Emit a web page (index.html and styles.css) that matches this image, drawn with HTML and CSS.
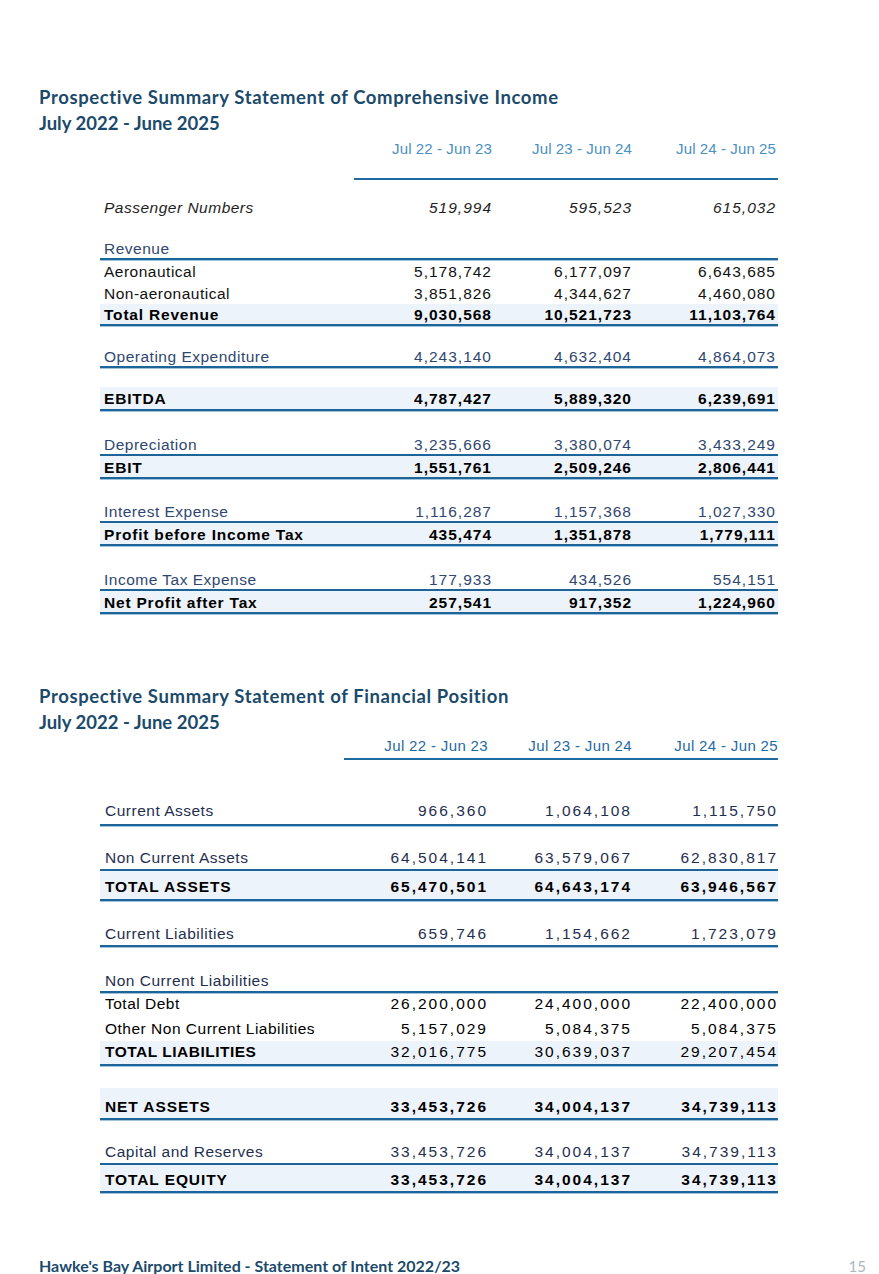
FILE: index.html
```html
<!DOCTYPE html>
<html lang="en">
<head>
<meta charset="utf-8">
<title>Statement of Intent 2022/23</title>
<link rel="stylesheet" href="styles.css">
</head>
<body>
<div class="page">
  <section class="block first">
    <h1 class="title">Prospective Summary Statement of Comprehensive Income</h1>
    <h2 class="subtitle">July 2022 - June 2025</h2>
    <div class="table t1">
      <div class="row head"><span></span><span class="h">Jul 22 - Jun 23</span><span class="h">Jul 23 - Jun 24</span><span class="h">Jul 24 - Jun 25</span></div>
      <div class="row it g16"><span>Passenger Numbers</span><span class="n">519,994</span><span class="n">595,523</span><span class="n">615,032</span></div>
      <div class="row soft rule g20"><span>Revenue</span><span></span><span></span><span></span></div>
      <div class="row h22"><span>Aeronautical</span><span class="n">5,178,742</span><span class="n">6,177,097</span><span class="n">6,643,685</span></div>
      <div class="row h22"><span>Non-aeronautical</span><span class="n">3,851,826</span><span class="n">4,344,627</span><span class="n">4,460,080</span></div>
      <div class="row b shade rule h20"><span>Total Revenue</span><span class="n">9,030,568</span><span class="n">10,521,723</span><span class="n">11,103,764</span></div>
      <div class="row soft rule g19"><span>Operating Expenditure</span><span class="n">4,243,140</span><span class="n">4,632,404</span><span class="n">4,864,073</span></div>
      <div class="row b shade rule g19 h22"><span>EBITDA</span><span class="n">4,787,427</span><span class="n">5,889,320</span><span class="n">6,239,691</span></div>
      <div class="row soft rule g22"><span>Depreciation</span><span class="n">3,235,666</span><span class="n">3,380,074</span><span class="n">3,433,249</span></div>
      <div class="row b shade rule"><span>EBIT</span><span class="n">1,551,761</span><span class="n">2,509,246</span><span class="n">2,806,441</span></div>
      <div class="row soft rule g21"><span>Interest Expense</span><span class="n">1,116,287</span><span class="n">1,157,368</span><span class="n">1,027,330</span></div>
      <div class="row b shade rule"><span>Profit before Income Tax</span><span class="n">435,474</span><span class="n">1,351,878</span><span class="n">1,779,111</span></div>
      <div class="row soft rule g22"><span>Income Tax Expense</span><span class="n">177,933</span><span class="n">434,526</span><span class="n">554,151</span></div>
      <div class="row b shade rule"><span>Net Profit after Tax</span><span class="n">257,541</span><span class="n">917,352</span><span class="n">1,224,960</span></div>
    </div>
  </section>

  <section class="block second">
    <h1 class="title">Prospective Summary Statement of Financial Position</h1>
    <h2 class="subtitle">July 2022 - June 2025</h2>
    <div class="table t2">
      <div class="row head"><span></span><span class="h">Jul 22 - Jun 23</span><span class="h">Jul 23 - Jun 24</span><span class="h">Jul 24 - Jun 25</span></div>
      <div class="row rule g38 p2 h26"><span>Current Assets</span><span class="n">966,360</span><span class="n">1,064,108</span><span class="n">1,115,750</span></div>
      <div class="row rule g21 h22"><span>Non Current Assets</span><span class="n">64,504,141</span><span class="n">63,579,067</span><span class="n">62,830,817</span></div>
      <div class="row b shade rule p5 h28"><span>TOTAL ASSETS</span><span class="n">65,470,501</span><span class="n">64,643,174</span><span class="n">63,946,567</span></div>
      <div class="row rule g22 h22"><span>Current Liabilities</span><span class="n">659,746</span><span class="n">1,154,662</span><span class="n">1,723,079</span></div>
      <div class="row rule g23"><span>Non Current Liabilities</span><span></span><span></span><span></span></div>
      <div class="row dark h22"><span>Total Debt</span><span class="n">26,200,000</span><span class="n">24,400,000</span><span class="n">22,400,000</span></div>
      <div class="row dark p3 h26"><span>Other Non Current Liabilities</span><span class="n">5,157,029</span><span class="n">5,084,375</span><span class="n">5,084,375</span></div>
      <div class="row shade rule h23 dark"><span class="lb">TOTAL LIABILITIES</span><span class="n">32,016,775</span><span class="n">30,639,037</span><span class="n">29,207,454</span></div>
      <div class="row b shade rule g22 p8 h30"><span>NET ASSETS</span><span class="n">33,453,726</span><span class="n">34,004,137</span><span class="n">34,739,113</span></div>
      <div class="row rule g21 h22"><span>Capital and Reserves</span><span class="n">33,453,726</span><span class="n">34,004,137</span><span class="n">34,739,113</span></div>
      <div class="row b shade rule p4 h26"><span>TOTAL EQUITY</span><span class="n">33,453,726</span><span class="n">34,004,137</span><span class="n">34,739,113</span></div>
    </div>
  </section>

  <footer class="footer">
    <span class="foot-text">Hawke's Bay Airport Limited - Statement of Intent 2022/23</span>
    <span class="page-no">15</span>
  </footer>
</div>
</body>
</html>
```

FILE: styles.css
```css
* { box-sizing: border-box; }
html, body { margin: 0; padding: 0; background: #ffffff; }
body {
  font-family: "Liberation Sans", Arial, sans-serif;
  color: #111111;
}
.page {
  width: 879px;
  height: 1274px;
  padding: 84px 13px 0 39px;
  display: flex;
  flex-direction: column;
}
.title, .subtitle {
  margin: 0;
  font-family: "Lato", "Open Sans", sans-serif;
  font-weight: 700;
  font-size: 18.5px;
  line-height: 26px;
  color: #1b4a6b;
}
.title { letter-spacing: 0.62px; }
.subtitle { letter-spacing: 0; }
.second { margin-top: 69px; }
.second .subtitle { line-height: 27px; }

.table {
  margin-left: 61px;
  width: 678px;
  font-size: 15.5px;
}
.row {
  display: grid;
  height: 21px;
  line-height: 23px;
  align-items: start;
  white-space: nowrap;
}
.t1 .row { grid-template-columns: 254px 140px 140px 144px; }
.t2 .row { grid-template-columns: 244px 144px 144px 146px; }
.row > span { display: block; }
.row > span:first-child { padding-left: 4px; letter-spacing: 0.5px; }
.row.b > span:first-child { letter-spacing: 0.8px; }
.row .n { text-align: right; padding-right: 2px; letter-spacing: 1px; }
.t2 .row > span:first-child { padding-left: 5px; letter-spacing: 0.5px; }
.t2 .row.b > span:first-child, .t2 .lb { letter-spacing: 0.9px; }
.t2 .row .n { letter-spacing: 2px; padding-right: 0; }

.head { height: 42px; margin-top: 2px; }
.head .h {
  text-align: right;
  font-size: 15px;
  line-height: 22px;
  height: 42px;
  padding-right: 2px;
  letter-spacing: 0.1px;
  color: #4a90c2;
  border-bottom: 2px solid #1f6a9e;
  padding-bottom: 18px;
}
.t2 .head { height: 25px; margin-top: -1px; }
.t2 .head .h {
  height: 25px;
  padding-bottom: 0;
  color: #1f6aa5;
  letter-spacing: 0.35px;
  padding-right: 0;
}

.rule { border-bottom: 2px solid #1d6598; box-shadow: 0 1px 0 #9fc3dd; }
.shade { background: #edf3fa; }
.b { font-weight: 700; color: #000000; }
.it { font-style: italic; color: #1e1e1e; }
.soft { color: #2f4770; }
.dark { color: #111111; }
.t2 .row { color: #1f2f4f; line-height: 22px; }
.t2 .row.b, .t2 .row.dark { color: #000000; }
.lb { font-weight: 700; }

.h20 { height: 22px; line-height: 22px; }
.h22 { height: 22px; line-height: 23px; }
.rule.h20 { height: 22px; }
.rule { height: 23px; }
.rule.h22 { height: 24px; }
.h23 { height: 25px; line-height: 23px; }
.t2 .h22 { line-height: 22px; }
.h26 { height: 26px; }
.t2 .h26 { line-height: 22px; }
.rule.h26 { height: 28px; }
.h28 { height: 30px; }
.t2 .h28, .t2 .h30 { line-height: 22px; }
.h30 { height: 32px; }
.p2 { padding-top: 2px; }
.p3 { padding-top: 3px; }
.p4 { padding-top: 4px; }
.p5 { padding-top: 5px; }
.p8 { padding-top: 8px; }

.g16 { margin-top: 16px; }
.g19 { margin-top: 19px; }
.g20 { margin-top: 20px; }
.g21 { margin-top: 21px; }
.g22 { margin-top: 22px; }
.g23 { margin-top: 23px; }
.g38 { margin-top: 38px; }

.footer {
  margin-top: auto;
  height: 18px;
  display: flex;
  justify-content: space-between;
  align-items: flex-start;
  font-family: "Lato", "Open Sans", sans-serif;
  font-size: 16px;
  line-height: 20px;
}
.foot-text { color: #1b4a6b; font-weight: 700; }
.page-no { color: #aeb6be; font-weight: 400; font-size: 15px; }
```
